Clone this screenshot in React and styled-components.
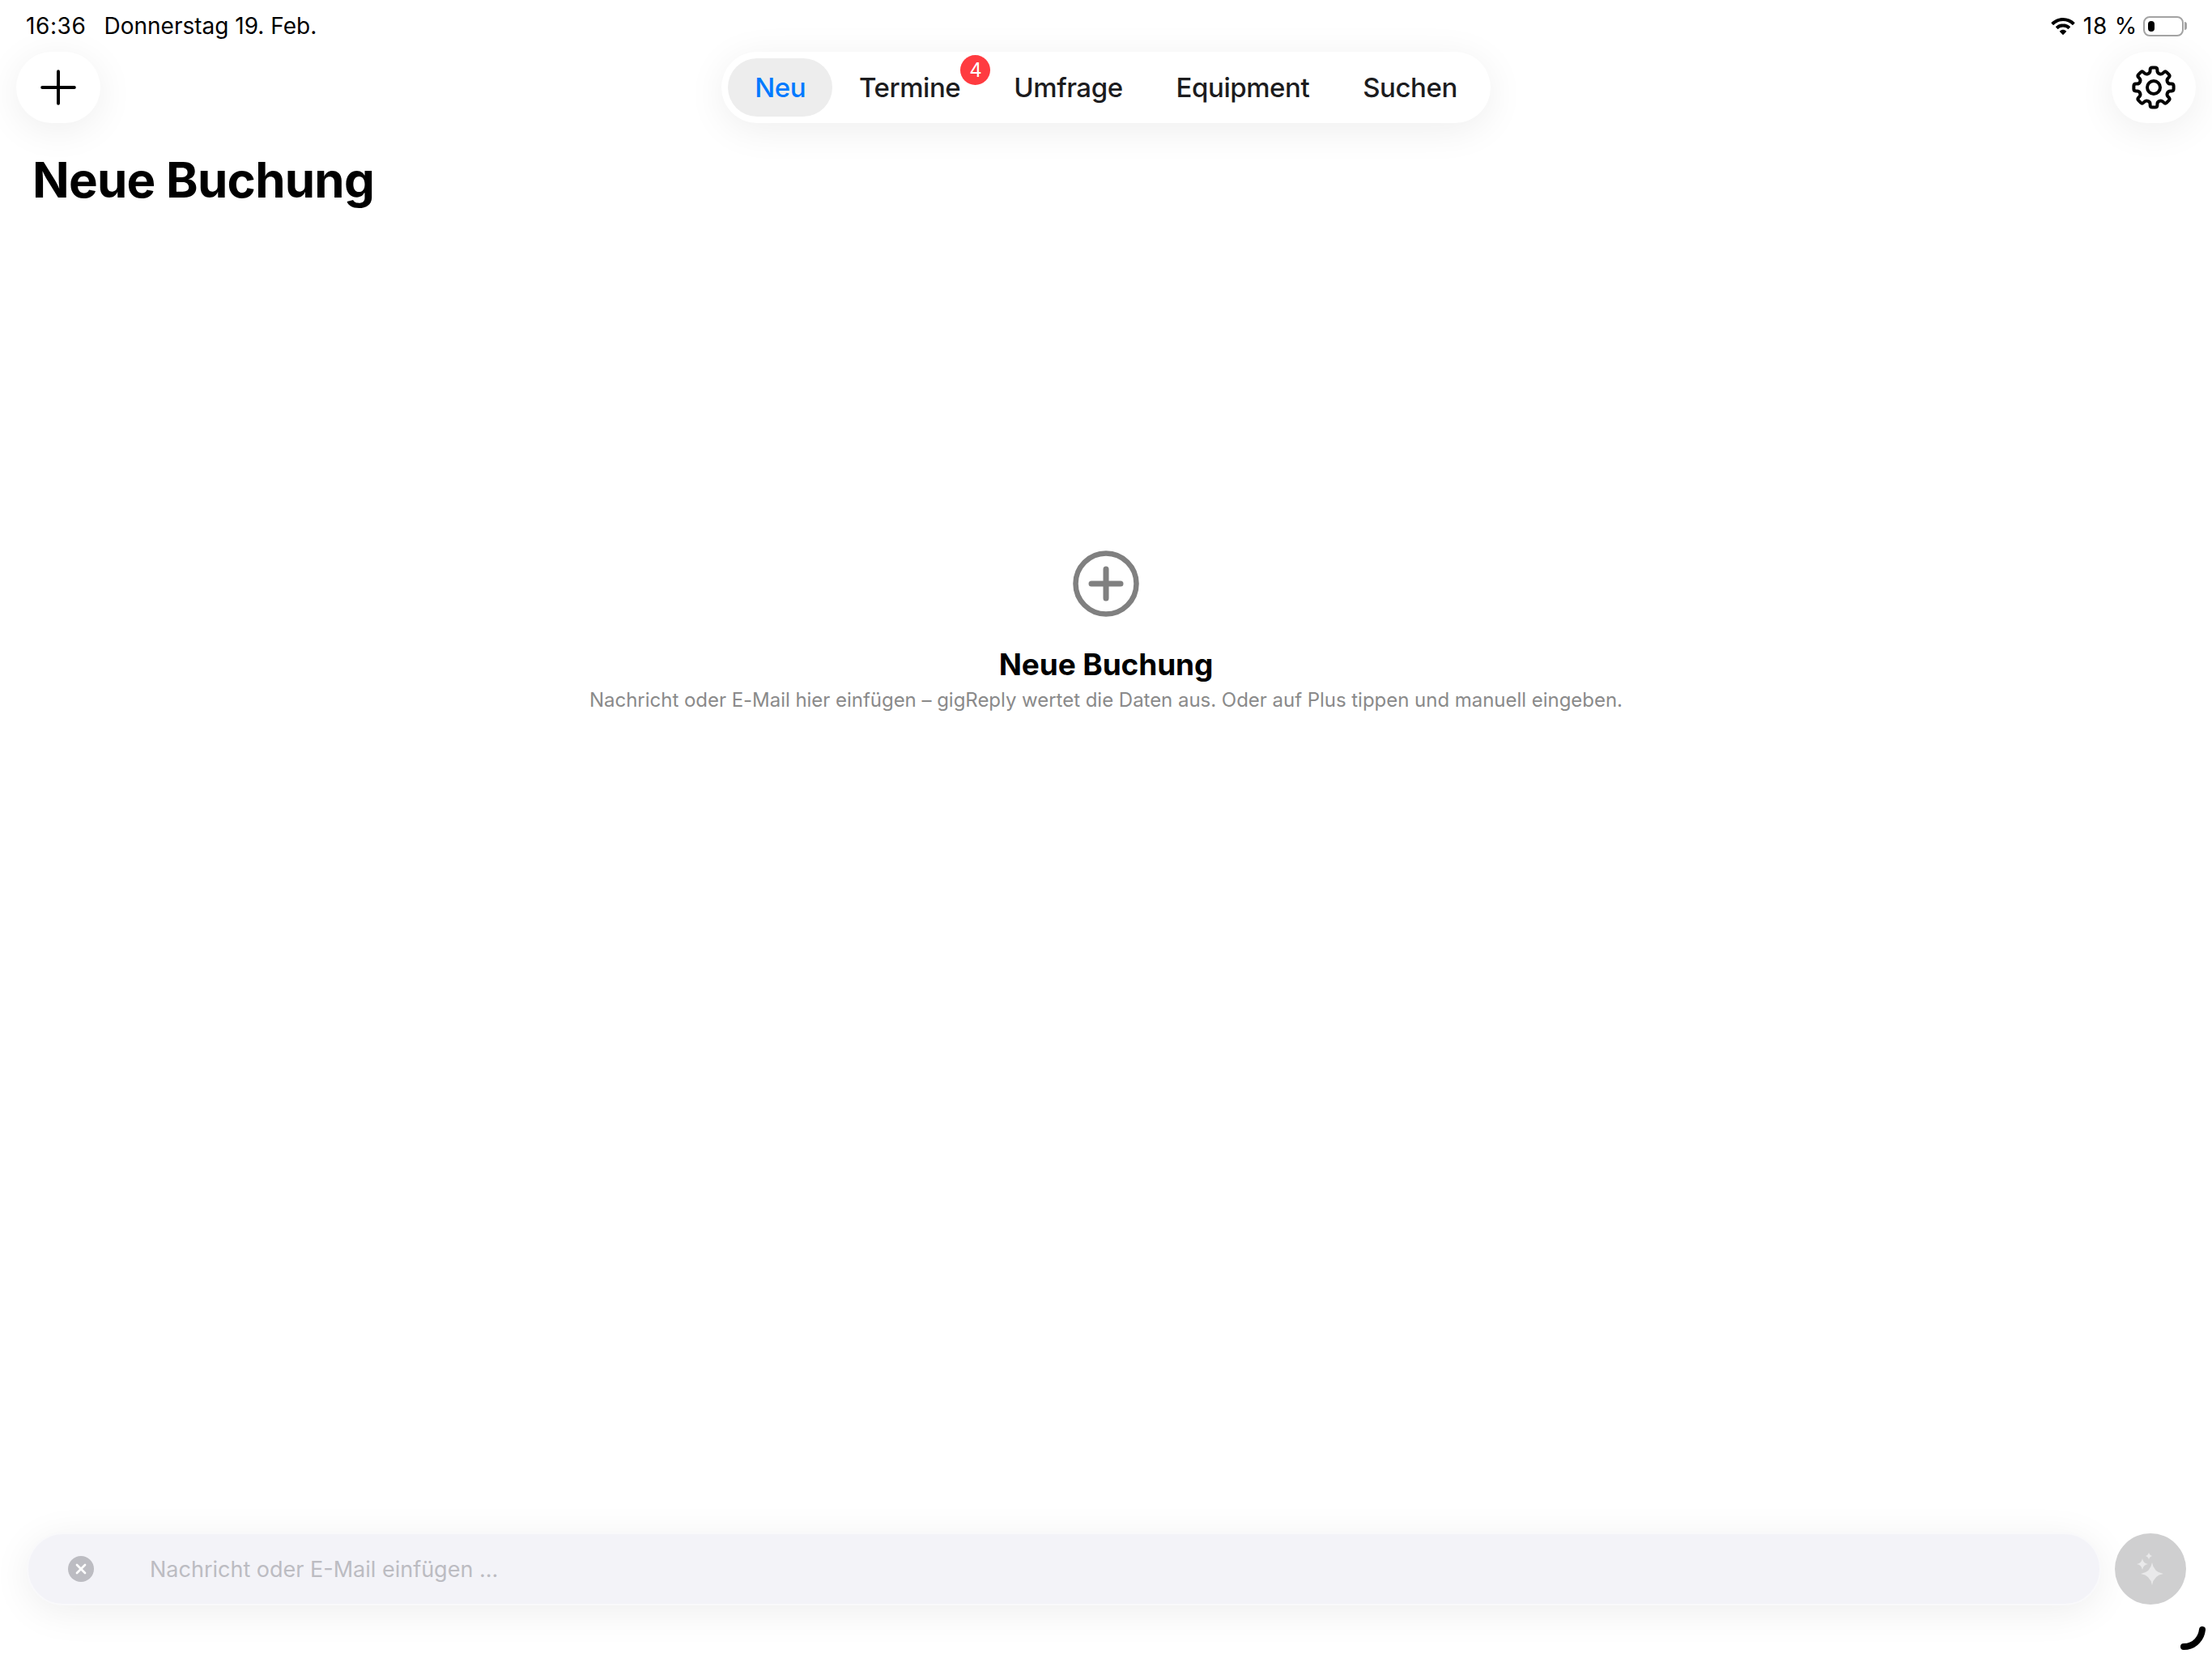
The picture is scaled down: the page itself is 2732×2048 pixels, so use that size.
import React from 'react'
import styled, { createGlobalStyle } from 'styled-components'
import { Plus, X } from 'lucide-react'

const GlobalStyle = createGlobalStyle`
  * {
    box-sizing: border-box;
  }
  html,
  body {
    margin: 0;
    padding: 0;
    background: #fff;
  }
  body {
    font-family: Inter, 'Liberation Sans', sans-serif;
    color: #000;
  }
`

const softShadow = '0 8px 48px rgba(0, 0, 0, 0.07)'

const tabs = [
  { label: 'Neu', active: true },
  { label: 'Termine', badge: 4 },
  { label: 'Umfrage' },
  { label: 'Equipment' },
  { label: 'Suchen' },
]

// 8 teeth, corners rounded with a quadratic curve
const gearPath = (cx, cy, tip, root, corner) => {
  const points = []
  for (let i = 0; i < 8; i++) {
    const a = (i * 45 - 90) * (Math.PI / 180)
    const at = (r, deg) => {
      const t = a + deg * (Math.PI / 180)
      return [cx + r * Math.cos(t), cy + r * Math.sin(t)]
    }
    points.push(at(root, -14), at(tip, -10), at(tip, 10), at(root, 14))
  }
  const toward = (from, to) => {
    const dx = to[0] - from[0]
    const dy = to[1] - from[1]
    const len = Math.hypot(dx, dy)
    const r = Math.min(corner, len / 2)
    return [from[0] + (dx / len) * r, from[1] + (dy / len) * r]
  }
  let d = ''
  points.forEach((p, i) => {
    const prev = points[(i + points.length - 1) % points.length]
    const next = points[(i + 1) % points.length]
    const a = toward(p, prev)
    const b = toward(p, next)
    d += `${i === 0 ? 'M' : 'L'}${a[0].toFixed(2)} ${a[1].toFixed(2)}Q${p[0].toFixed(2)} ${p[1].toFixed(2)} ${b[0].toFixed(2)} ${b[1].toFixed(2)}`
  })
  return d + 'Z'
}

const GearIcon = () => (
  <svg width='56' height='56' viewBox='0 0 56 56' fill='none' stroke='#000' strokeWidth='4'>
    <path d={gearPath(28, 28, 25, 18.5, 2.6)} strokeLinejoin='round' />
    <circle cx='28' cy='28' r='8' />
  </svg>
)

const WifiIcon = () => (
  <svg width='30' height='21' viewBox='0 0 30 21'>
    <path d='M15 0C9.4 0 4.4 2.2.7 5.8c-.3.3-.3.7 0 1l1.9 2c.3.3.7.3 1 0C6.600 5.900 10.600 4.100 15 4.100s8.400 1.800 11.400 4.700c.3.3.7.3 1 0l1.900-2c.3-.3.3-.7 0-1C25.600 2.200 20.600 0 15 0z' />
    <path d='M15 7.300c-3.400 0-6.500 1.300-8.800 3.500-.3.300-.3.700 0 1l2 2c.3.300.7.300 1 0 1.500-1.400 3.600-2.300 5.800-2.300s4.300.900 5.800 2.300c.3.300.7.300 1 0l2-2c.3-.3.3-.7 0-1-2.300-2.200-5.400-3.500-8.800-3.500z' />
    <path d='M15 14.700c-1.500 0-2.900.6-3.900 1.500-.3.300-.3.700 0 1l3.400 3.500c.3.300.7.300 1 0l3.400-3.500c.3-.3.3-.7 0-1-1-.9-2.400-1.500-3.900-1.500z' />
  </svg>
)

const CornerMark = styled.svg`
  position: absolute;
  right: 6px;
  bottom: 8px;
  width: 34px;
  height: 32px;
`

const star = (cx, cy, r) => {
  const k = r * 0.14
  return `M${cx} ${cy - r}Q${cx + k} ${cy - k} ${cx + r} ${cy}Q${cx + k} ${cy + k} ${cx} ${cy + r}Q${cx - k} ${cy + k} ${cx - r} ${cy}Q${cx - k} ${cy - k} ${cx} ${cy - r}Z`
}

const Sparkles = () => (
  <svg width='34' height='42' viewBox='0 0 34 42' fill='#fff' fillOpacity='0.55'>
    <path d={star(19, 27, 14)} />
    <path d={star(7, 15, 7)} />
    <path d={star(15, 5, 4.5)} />
  </svg>
)

const App = () => {
  return (
    <Page>
      <GlobalStyle />
      <StatusBar>
        <div className='left'>
          <span className='time'>16:36</span>
          <span>Donnerstag 19. Feb.</span>
        </div>
        <div className='right'>
          <WifiIcon />
          <span className='level'>18 %</span>
          <Battery>
            <i />
          </Battery>
        </div>
      </StatusBar>

      <TopBar>
        <RoundButton>
          <Plus size={68} strokeWidth={1.4} color='#000' />
        </RoundButton>
        <Tabs>
          {tabs.map((tab) => {
            return (
              <Tab key={tab.label} $active={tab.active}>
                {tab.label}
                {tab.badge && <Badge>{tab.badge}</Badge>}
              </Tab>
            )
          })}
        </Tabs>
        <RoundButton>
          <GearIcon />
        </RoundButton>
      </TopBar>

      <Heading>Neue Buchung</Heading>

      <Empty>
        <svg width='82' height='82' viewBox='0 0 82 82' fill='none' stroke='#808080'>
          <circle cx='41' cy='41' r='37.500' strokeWidth='6.500' />
          <path d='M41 23v36M23 41h36' strokeWidth='7' strokeLinecap='round' />
        </svg>
        <h2>Neue Buchung</h2>
        <p>
          Nachricht oder E-Mail hier einfügen – gigReply wertet die Daten aus. Oder auf Plus tippen und manuell eingeben.
        </p>
      </Empty>

      <Composer>
        <InputBox>
          <ClearButton>
            <X size={20} strokeWidth={3.2} color='#fff' />
          </ClearButton>
          <span>Nachricht oder E-Mail einfügen ...</span>
        </InputBox>
        <SendButton>
          <Sparkles />
        </SendButton>
      </Composer>

      <CornerMark viewBox='0 0 34 32' fill='none'>
        <path d='M28 5c-1 9-8 21-23 21' stroke='#000' strokeWidth='8' strokeLinecap='round' />
      </CornerMark>
    </Page>
  )
}

const Page = styled.div`
  position: relative;
  display: flex;
  flex-direction: column;
  height: 100vh;
  overflow: hidden;
  background: #fff;
`

const StatusBar = styled.header`
  display: flex;
  justify-content: space-between;
  align-items: center;
  height: 64px;
  padding: 0 35px 0 32px;
  font-size: 28px;
  color: #000;

  .left {
    display: flex;
    gap: 22px;
  }
  .time {
    letter-spacing: 0.6px;
  }
  .right {
    display: flex;
    align-items: center;
    gap: 10px;
  }
  .level {
    letter-spacing: 0.8px;
    margin-right: -3px;
  }
`

const Battery = styled.div`
  position: relative;
  width: 50px;
  height: 25px;
  padding: 4px;
  border: 2px solid #a3a3a3;
  border-radius: 8px;

  i {
    display: block;
    width: 8px;
    height: 100%;
    border-radius: 4px;
    background: #000;
  }
  &::after {
    content: '';
    position: absolute;
    top: 5px;
    right: -6px;
    width: 3px;
    height: 10px;
    border-radius: 0 3px 3px 0;
    background: #a3a3a3;
  }
`

const TopBar = styled.div`
  display: grid;
  grid-template-columns: 104px 1fr 104px;
  align-items: center;
  padding: 0 20px;
`

const RoundButton = styled.div`
  display: flex;
  align-items: center;
  justify-content: center;
  height: 88px;
  border-radius: 44px;
  background: #fff;
  box-shadow: ${softShadow};
`

const Tabs = styled.nav`
  justify-self: center;
  display: flex;
  height: 88px;
  padding: 8px;
  border-radius: 44px;
  background: #fff;
  box-shadow: ${softShadow};
`

const Tab = styled.div`
  position: relative;
  display: flex;
  align-items: center;
  padding: 0 33px;
  border-radius: 36px;
  font-size: 33px;
  letter-spacing: -0.45px;
  font-weight: 500;
  color: ${(props) => (props.$active ? '#007aff' : '#1c1c1e')};
  background: ${(props) => (props.$active ? '#ededed' : 'transparent')};
`

const Badge = styled.span`
  position: absolute;
  top: -4px;
  right: -4px;
  display: flex;
  align-items: center;
  justify-content: center;
  width: 37px;
  height: 37px;
  border-radius: 50%;
  background: #ff3b40;
  color: #fff;
  font-size: 24px;
  font-weight: 400;
`

const Heading = styled.h1`
  margin: 34px 0 0;
  padding-left: 40px;
  font-size: 60px;
  letter-spacing: -0.75px;
  line-height: 72px;
  font-weight: 700;
`

const Empty = styled.main`
  flex: 1;
  display: flex;
  flex-direction: column;
  align-items: center;
  padding-top: 422px;

  h2 {
    margin: 37px 0 0;
    font-size: 37px;
    letter-spacing: -0.1px;
    line-height: 44px;
    font-weight: 700;
  }
  p {
    margin: 6px 0 0;
    font-size: 24px;
    letter-spacing: -0.03px;
    line-height: 32px;
    color: #8a8a8a;
  }
`

const Composer = styled.div`
  display: flex;
  align-items: center;
  gap: 17px;
  padding: 0 32px 65px 33px;
`

const InputBox = styled.div`
  flex: 1;
  display: flex;
  align-items: center;
  gap: 69px;
  height: 90px;
  padding-left: 49px;
  border: 2px solid #f9f9fb;
  border-radius: 45px;
  background: #f3f3f8;
  box-shadow: ${softShadow};
  font-size: 27px;
  color: #bcbcc2;
`

const ClearButton = styled.div`
  display: flex;
  align-items: center;
  justify-content: center;
  width: 32px;
  height: 32px;
  border-radius: 50%;
  background: #bcbcc2;
`

const SendButton = styled.div`
  display: flex;
  align-items: center;
  justify-content: center;
  width: 88px;
  height: 88px;
  border-radius: 50%;
  background: #cfcfd0;
`

export default App
